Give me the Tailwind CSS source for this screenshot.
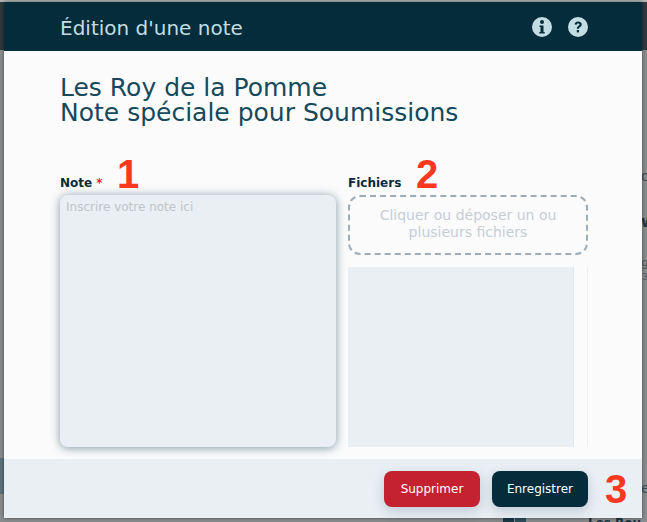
<!DOCTYPE html>
<html lang="en">
<head>
  <meta charset="UTF-8" />
  <title>Édition d'une note</title>
  <script src="https://cdn.jsdelivr.net/npm/@tailwindcss/browser@4"></script>
</head>
<body class="w-[647px] h-[522px] overflow-hidden bg-[#8b8e8f] font-['DejaVu_Sans',sans-serif]">
  <div class="relative w-full h-full pt-[2px] pl-[4px] overflow-hidden">
    <!-- Page behind the modal -->
    <div class="absolute left-0 top-0 w-full h-[2px] bg-[#b4b6b7]"></div>
    <div class="absolute left-0 top-[2px] w-full h-[48px] bg-[#30393d]"></div>
    <div class="absolute left-0 top-[458px] w-[4px] h-[36px] bg-[#5f747d]"></div>
    <span class="absolute left-[641px] top-[168px] text-[14px] leading-[16px] text-[#3d4a50]">ct</span>
    <span class="absolute left-[641px] top-[214px] text-[15px] leading-[16px] font-bold text-[#243a44]">w</span>
    <span class="absolute left-[641px] top-[258px] text-[12px] leading-[14px] text-[#555e62]">9</span>
    <span class="absolute left-[642px] top-[272px] text-[9px] leading-[10px] text-[#555e62]">3</span>
    <span class="absolute left-[641px] top-[480px] text-[14px] leading-[16px] text-[#33505c]">e</span>
    <div class="absolute left-[503px] top-[518px] flex gap-[1px]">
      <div class="w-[11px] h-[4px] bg-[#1d3a47]"></div>
      <div class="w-[11px] h-[4px] bg-[#2e4f5c]"></div>
    </div>
    <span class="absolute left-[588px] top-[516px] text-[12px] leading-[14px] font-bold text-[#1d3340]">Les Rou</span>

    <!-- Modal -->
    <div class="relative w-[638px] h-[516px] bg-[#fbfbfb] flex flex-col shadow-[0_0_4px_rgba(0,0,0,0.5)]">
      <!-- Header -->
      <div class="h-[49px] shrink-0 bg-[#052c3b] flex items-center justify-between pl-[56px] pr-[54px]">
        <span class="text-[20px] leading-[24px] mt-[2px] text-[#c2dde3]">Édition d'une note</span>
        <div class="flex items-center gap-[16px]">
          <svg width="20" height="20" viewBox="0 0 20 20"><circle cx="10" cy="10" r="10" fill="#c2dde3"/><circle cx="10" cy="5" r="2" fill="#052c3b"/><path d="M7.5 8.5h4v6.5h1.2v1.5H7.3V15h1.2v-5H7.5z" fill="#052c3b"/></svg>
          <svg width="20" height="20" viewBox="0 0 20 20"><circle cx="10" cy="10" r="10" fill="#c2dde3"/><path d="M6.6 7.6C6.7 5.6 8.2 4.4 10.2 4.4c2 0 3.5 1.2 3.5 3 0 1.5-.9 2.2-1.8 2.8-.7.5-1 .8-1 1.6H8.8c0-1.5.5-2.2 1.5-2.9.7-.5 1.2-.8 1.2-1.4 0-.7-.6-1.1-1.3-1.1-.8 0-1.4.5-1.5 1.3z" fill="#052c3b"/><rect x="8.8" y="13" width="2.2" height="2.4" fill="#052c3b"/></svg>
        </div>
      </div>

      <!-- Body -->
      <div class="flex-1 min-h-0 pl-[56px] pr-[54px] pt-[24px]">
        <h1 class="text-[25px] leading-[25px] text-[#15495c]">Les Roy de la Pomme<br />Note spéciale pour Soumissions</h1>
        <div class="flex gap-[12px] mt-[48px]">
          <div class="w-[276px]">
            <div class="relative h-[20px] text-[12px] leading-[20px] font-bold text-[#052c3b]">Note <span class="text-[#f01f2c]">*</span>
              <span class="absolute left-[57px] top-[-19px] text-[40px] leading-[40px] font-bold font-['Liberation_Sans',sans-serif] text-[#f9391f]">1</span>
            </div>
            <div class="mt-[2px] h-[252px] rounded-[8px] bg-[#e9eff3] px-[6px] py-[4px] text-[12px] leading-[16px] text-[#c0c5c9] shadow-[0_1px_10px_rgba(20,70,90,0.55)]">Inscrire votre note ici</div>
          </div>
          <div class="w-[240px]">
            <div class="relative h-[20px] text-[12px] leading-[20px] font-bold text-[#052c3b]">Fichiers
              <span class="absolute left-[68px] top-[-19px] text-[40px] leading-[40px] font-bold font-['Liberation_Sans',sans-serif] text-[#f9391f]">2</span>
            </div>
            <div class="mt-[2px] h-[60px] pb-[2px] rounded-[12px] border-2 border-dashed border-[#9dacb8] flex items-center justify-center text-center text-[14px] leading-[17px] text-[#c6cdd7]">Cliquer ou déposer un ou<br />plusieurs fichiers</div>
            <div class="mt-[12px] h-[180px] flex border-r border-[#eeeeee]">
              <div class="w-[226px] bg-[#e9eff3] border-r border-[#e3e6e8]"></div>
            </div>
          </div>
        </div>
      </div>

      <!-- Footer -->
      <div class="relative h-[59px] shrink-0 bg-[#e9eff3] flex items-start justify-end gap-[12px] pt-[12px] pr-[54px]">
        <button class="w-[96px] h-[36px] rounded-[8px] bg-[#c42131] text-white text-[12px] shadow-[0_4px_12px_rgba(40,70,110,0.22)]">Supprimer</button>
        <button class="w-[96px] h-[36px] rounded-[8px] bg-[#052c3b] text-white text-[12px] shadow-[0_4px_12px_rgba(40,70,110,0.22)]">Enregistrer</button>
        <span class="absolute left-[601px] top-[10px] text-[40px] leading-[40px] font-bold font-['Liberation_Sans',sans-serif] text-[#f9391f]">3</span>
      </div>
    </div>
  </div>
</body>
</html>
